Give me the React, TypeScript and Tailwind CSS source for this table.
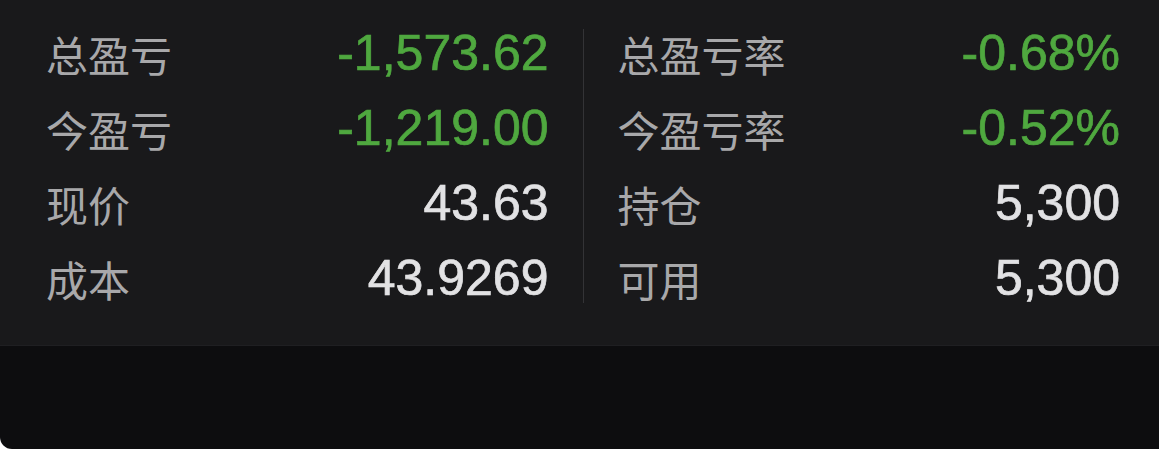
import React from "react";

type Item = { label: string; value: string; green?: boolean };

const left: Item[] = [
  { label: "总盈亏", value: "-1,573.62", green: true },
  { label: "今盈亏", value: "-1,219.00", green: true },
  { label: "现价", value: "43.63" },
  { label: "成本", value: "43.9269" },
];

const right: Item[] = [
  { label: "总盈亏率", value: "-0.68%", green: true },
  { label: "今盈亏率", value: "-0.52%", green: true },
  { label: "持仓", value: "5,300" },
  { label: "可用", value: "5,300" },
];

function Column({ items, className }: { items: Item[]; className: string }) {
  return (
    <div className={"flex-1 flex flex-col " + className}>
      {items.map((it) => (
        <div key={it.label} className="h-[75px] flex items-center justify-between">
          <span className="text-[42px] text-[#a8a8aa] font-['Noto_Sans_CJK_SC',sans-serif]">
            {it.label}
          </span>
          <span
            className={
              "text-[50px] font-['Liberation_Sans',sans-serif] [-webkit-text-stroke:0.7px_currentColor] " +
              (it.green ? "text-[#4fa83f]" : "text-[#e2e2e4]")
            }
          >
            {it.value}
          </span>
        </div>
      ))}
    </div>
  );
}

export default function App() {
  return (
    <div className="w-[1159px] h-[449px] bg-white">
      <div className="w-full h-full bg-[#0d0d0f] rounded-bl-[12px] overflow-hidden flex flex-col">
        <div className="h-[346px] bg-[#19191b] border-b border-[#1f1f22] flex items-start pt-[16px]">
          <Column items={left} className="pl-[46px] pr-[34px]" />
          <div className="w-px h-[274px] mt-[13px] bg-[#333336]" />
          <Column items={right} className="pl-[34px] pr-[39px]" />
        </div>
        <div className="flex-1" />
      </div>
    </div>
  );
}
